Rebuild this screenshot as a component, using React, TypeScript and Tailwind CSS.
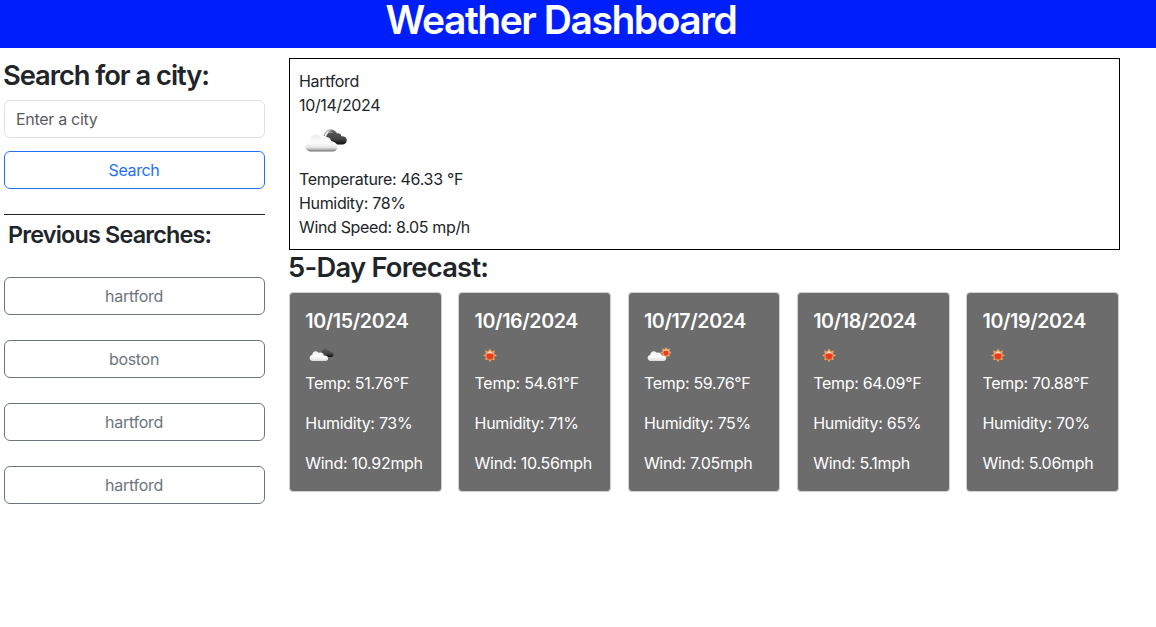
import React from 'react';

type Kind = 'broken' | 'sun' | 'few';

const CLOUD = 'M11 34.5 C7.5 34.5 5.4 32.3 5.4 29.5 C5.4 26.8 7.4 24.6 10 24.2 C10 20.2 12.6 17.6 15.8 17.6 C18.6 17.6 20.4 19 21.3 20.6 C22.2 20 23.4 19.7 24.6 19.9 C28 20.4 29.8 22.8 29.8 25.6 C30.6 25.2 31.6 25.1 32.8 25.5 C35.6 26 37.3 28 37.3 30.2 C37.3 33 35.4 34.5 32.4 34.5 Z';

function Rays({ cx, cy, r, size }: { cx: number; cy: number; r: number; size: number }) {
  return (
    <g>
      {[0, 45, 90, 135, 180, 225, 270, 315].map((a) => (
        <path
          key={a}
          d={`M${cx - 2.8} ${cy - r} L${cx} ${cy - size} L${cx + 2.8} ${cy - r} Z`}
          fill="#e9a04a"
          transform={`rotate(${a} ${cx} ${cy})`}
        />
      ))}
      <circle cx={cx} cy={cy} r={r} fill="#f4bd7c" />
      <circle cx={cx} cy={cy + 0.6} r={r - 1.3} fill="#f03a20" />
      <path
        d={`M${cx - r + 1.6} ${cy - 2.4} Q${cx} ${cy - r * 1.5} ${cx + r - 1.6} ${cy - 2.4} Q${cx} ${cy - 5} ${cx - r + 1.6} ${cy - 2.4}`}
        fill="#fbe3c0"
      />
    </g>
  );
}

function WeatherIcon({ kind, id, className }: { kind: Kind; id: string; className: string }) {
  return (
    <svg viewBox="0 0 50 50" className={className}>
      <defs>
        <linearGradient id={`${id}-w`} x1="0" y1="0" x2="0" y2="1">
          <stop offset="0" stopColor="#eeeeee" />
          <stop offset="0.5" stopColor="#fdfdfd" />
          <stop offset="0.75" stopColor="#e6e6e6" />
          <stop offset="0.88" stopColor="#b5b5b5" />
          <stop offset="1" stopColor="#6e6e6e" />
        </linearGradient>
        <linearGradient id={`${id}-d`} x1="0" y1="0" x2="0" y2="1">
          <stop offset="0" stopColor="#5c5c5c" />
          <stop offset="0.6" stopColor="#444444" />
          <stop offset="1" stopColor="#111111" />
        </linearGradient>
        <linearGradient id={`${id}-l`} x1="0" y1="0" x2="0" y2="1">
          <stop offset="0" stopColor="#ececec" />
          <stop offset="0.5" stopColor="#ffffff" />
          <stop offset="1" stopColor="#dddddd" />
        </linearGradient>
      </defs>
      {kind === 'sun' && <Rays cx={25} cy={24.8} r={7.6} size={12} />}
      {kind === 'few' && <Rays cx={37} cy={20} r={5.8} size={9.8} />}
      {kind === 'broken' && (
        <>
          <path
            d="M26 20 C27 15 30 12.6 33 13.3 C35.2 13.6 36.5 14.9 37 16.6 C38.8 15.7 41 16.8 41.4 19.4 C44.3 19.1 46.8 20.6 46.8 23.3 C46.8 26 44.8 27.5 42.4 27.5 L37 27.5 C35.5 25.5 33.6 24.4 31.2 24 C30.3 21.4 28.8 20.2 26 20 Z"
            fill={`url(#${id}-d)`}
          />
          <path d="M24.2 19 C25.2 14.7 28.5 12 32 13 C33.8 13.4 35 14.5 35.5 16" fill="none" stroke="#6a6a6a" strokeWidth="0.8" />
          {id === 'now' && <path d="M25.9 19.2 C27 16 29.5 14.2 32.3 15.6" fill="none" stroke="#d9d9d9" strokeWidth="0.9" />}
        </>
      )}
      {kind !== 'sun' && <path d={CLOUD} fill={id === 'now' ? `url(#${id}-w)` : `url(#${id}-l)`} />}
    </svg>
  );
}

const history = ['hartford', 'boston', 'hartford', 'hartford'];

const forecast: { date: string; kind: Kind; temp: string; humidity: string; wind: string }[] = [
  { date: '10/15/2024', kind: 'broken', temp: '51.76', humidity: '73', wind: '10.92' },
  { date: '10/16/2024', kind: 'sun', temp: '54.61', humidity: '71', wind: '10.56' },
  { date: '10/17/2024', kind: 'few', temp: '59.76', humidity: '75', wind: '7.05' },
  { date: '10/18/2024', kind: 'sun', temp: '64.09', humidity: '65', wind: '5.1' },
  { date: '10/19/2024', kind: 'sun', temp: '70.88', humidity: '70', wind: '5.06' },
];

export default function App() {
  return (
    <div className="min-h-[627px] bg-white font-['Inter',sans-serif] text-base tracking-[-0.34px] text-[#212529]">
      <header className="h-12 bg-[#001ef9] pr-[34px] text-center">
        <h1 className="h-12 text-[39px] leading-[40px] font-[590] tracking-[-1.45px] text-white">Weather Dashboard</h1>
      </header>
      <div className="flex">
        <aside className="ml-1 w-[261px] shrink-0 pt-[10px]">
          <h2 className="mb-2 -ml-px h-[34px] text-[27.3px] leading-[36px] font-[590] tracking-[-1.03px]">Search for a city:</h2>
          <input
            placeholder="Enter a city"
            className="block h-[38px] w-full rounded-md border border-[#dee2e6] px-[11px] tracking-[-0.3px] placeholder:text-[#595c5f]"
          />
          <button className="mt-[13px] block h-[38px] w-full rounded-md border border-[#2470f5] pr-px tracking-[-0.36px] text-[#2470f5]">
            Search
          </button>
          <div className="mt-[25px] border-t border-[#212529] pt-[5px] pl-1">
            <h3 className="h-[29px] text-[23.4px] leading-[29px] font-[590] tracking-[-0.82px]">Previous Searches:</h3>
          </div>
          <div className="mt-[28px] flex flex-col gap-[25px]">
            {history.map((city, i) => (
              <button key={i} className="h-[38px] w-full rounded-md border border-[#6c757d] pr-px tracking-[-0.3px] text-[#6c757d]">
                {city}
              </button>
            ))}
          </div>
        </aside>
        <main className="ml-6 w-[831px] pt-[10px]">
          <section className="h-[192px] border border-black py-[10px] pl-[9px] leading-6">
            <p>Hartford</p>
            <p>10/14/2024</p>
            <WeatherIcon kind="broken" id="now" className="ml-px block size-[50px]" />
            <p className="tracking-[-0.3px]">Temperature: 46.33 °F</p>
            <p>Humidity: 78%</p>
            <p>Wind Speed: 8.05 mp/h</p>
          </section>
          <h2 className="mb-2 -ml-px h-[34px] text-[27.3px] leading-[36px] font-[590] tracking-[-0.72px]">5-Day Forecast:</h2>
          <section className="grid w-[830px] grid-cols-5 gap-[16.5px]">
            {forecast.map((d) => (
              <article
                key={d.date}
                className="h-[200px] rounded-[4px] border border-[#d0d0d0] bg-[#6c6c6c] pt-4 pl-[15.3px] leading-6 tracking-[-0.3px] text-white"
              >
                <h5 className="mb-2 text-[19.6px] leading-6 font-[590] tracking-[-0.36px]">{d.date}</h5>
                <WeatherIcon kind={d.kind} id={`d${d.date.slice(3, 5)}`} className="ml-[0.5px] block size-[30px] pb-px" />
                <p className="mb-4">Temp: {d.temp}°F</p>
                <p className="mb-4">Humidity: {d.humidity}%</p>
                <p>Wind: {d.wind}mph</p>
              </article>
            ))}
          </section>
        </main>
      </div>
    </div>
  );
}
